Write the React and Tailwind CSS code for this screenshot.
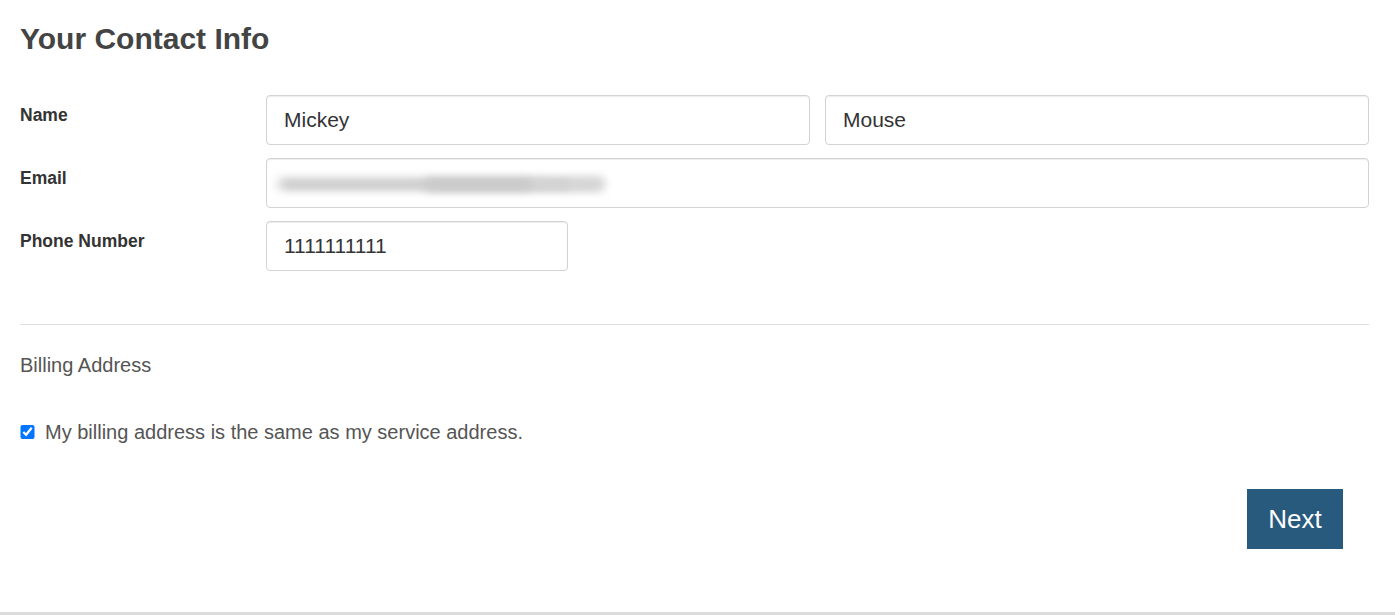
import React, { useState } from "react";

const inputClass =
    "h-[50px] rounded-[4px] border border-[#d3d3d3] bg-white px-[17px] text-[21px] text-[#333] shadow-[inset_0_1px_1px_rgba(0,0,0,0.075)] outline-none";

const FieldRow = ({ label, children }) => (
    <div className="grid grid-cols-[246px_1fr]">
        <label className="pt-[10px] text-[17.5px] leading-[20px] font-bold text-[#333]">{label}</label>
        {children}
    </div>
);

const App = () => {
    const [first, setFirst] = useState("Mickey");
    const [last, setLast] = useState("Mouse");
    const [phone, setPhone] = useState("1111111111");
    const [sameAddress, setSameAddress] = useState(true);

    return (
        <div className="font-['Liberation_Sans',Arial,sans-serif] bg-white">
            <div className="flex h-[615px] flex-col border-b-[3px] border-[#dcdcdc] pl-[20px] pr-[26px] pt-[22px]">
                <h2 className="text-[30px] leading-[33px] font-bold text-[#444]">Your Contact Info</h2>

                <div className="mt-[40px] flex flex-col gap-[13px]">
                    <FieldRow label="Name">
                        <div className="grid grid-cols-2 gap-[15px]">
                            <input className={inputClass + " w-full"} spellCheck={false} value={first} onChange={(e) => setFirst(e.target.value)} />
                            <input className={inputClass + " w-full"} spellCheck={false} value={last} onChange={(e) => setLast(e.target.value)} />
                        </div>
                    </FieldRow>

                    <FieldRow label="Email">
                        {/* email is blurred out in the original */}
                        <div className="flex h-[50px] w-full items-center rounded-[4px] border border-[#d3d3d3] bg-white px-[7px] shadow-[inset_0_1px_1px_rgba(0,0,0,0.075)]">
                            <div className="relative mt-[2px] h-[24px] w-[336px]">
                                <div className="absolute left-[2px] right-[4px] top-[5px] h-[14px] rounded-full bg-[#dedede] blur-[4px]" />
                                <div className="absolute left-[10px] right-[40px] top-[8px] h-[9px] rounded-full bg-[#cfcfcf] blur-[3px]" />
                                <div className="absolute left-[150px] top-[6px] h-[13px] w-[110px] rounded-full bg-[#cacaca] blur-[4px]" />
                                <div className="absolute right-[8px] top-[7px] h-[11px] w-[70px] rounded-full bg-[#d4d4d4] blur-[4px]" />
                            </div>
                        </div>
                    </FieldRow>

                    <FieldRow label="Phone Number">
                        <input
                            className={inputClass + " w-[302px]"}
                            spellCheck={false}
                            value={phone}
                            onChange={(e) => setPhone(e.target.value)}
                        />
                    </FieldRow>
                </div>

                <hr className="mt-[53px] border-t border-[#dddddd]" />

                <div className="mt-[28px] text-[20px] leading-[24px] text-[#555]">Billing Address</div>

                <label className="mt-[43px] flex items-center gap-[10px] text-[20px] leading-[24px] text-[#555]">
                    <input
                        type="checkbox"
                        className="m-0 h-[14px] w-[15px]"
                        checked={sameAddress}
                        onChange={(e) => setSameAddress(e.target.checked)}
                    />
                    My billing address is the same as my service address.
                </label>

                <div className="mt-[45px] flex justify-end pr-[26px]">
                    <button className="h-[60px] w-[96px] bg-[#285a7e] text-[26px] text-white">Next</button>
                </div>
            </div>
        </div>
    );
};

export default App;
